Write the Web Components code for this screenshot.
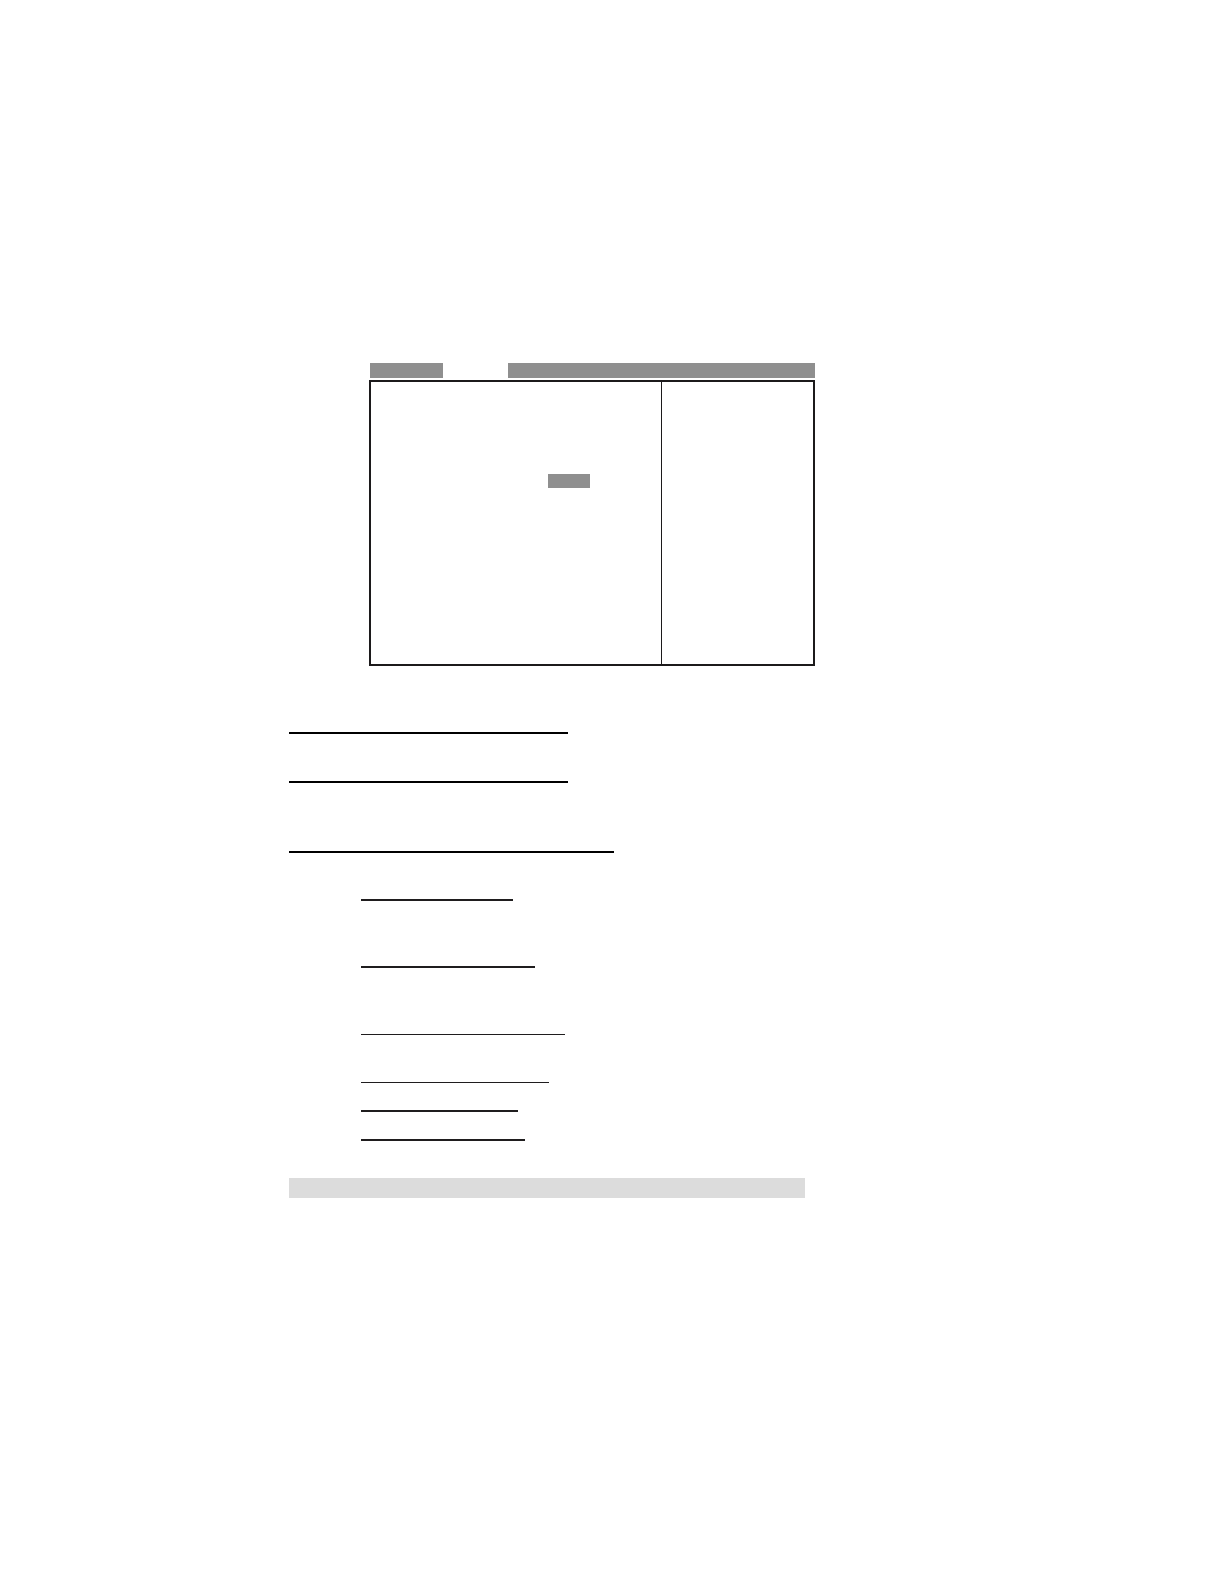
<!DOCTYPE html>
<html lang="en">
<head>
<meta charset="utf-8">
<meta name="viewport" content="width=device-width, initial-scale=1">
<title>Setup page</title>
<style>
body {
    margin: 0;
    background: #fff;
    font-family: "Liberation Sans", Arial, sans-serif;
}
</style>
</head>
<body>
<manual-page>
    <setup-screen slot="figure"></setup-screen>
    <heading-rule length="279" space="66"></heading-rule>
    <heading-rule length="279" space="47"></heading-rule>
    <heading-rule length="325" space="68"></heading-rule>
    <heading-rule sub length="152" space="46"></heading-rule>
    <heading-rule sub length="174" space="65"></heading-rule>
    <heading-rule sub thin length="204" space="66"></heading-rule>
    <heading-rule sub thin length="188" space="47"></heading-rule>
    <heading-rule sub length="157" space="27"></heading-rule>
    <heading-rule sub length="164" space="27"></heading-rule>
    <note-band slot="note"></note-band>
</manual-page>

<script>
class ManualPage extends HTMLElement {
    constructor() {
        super();
        this.attachShadow({ mode: "open" }).innerHTML = `
        <style>
        :host {
            display: block;
            box-sizing: border-box;
            max-width: 815px;
            padding: 363px 0 386px 289px;
        }
        main {
            display: flex;
            flex-direction: column;
        }
        ::slotted(setup-screen) {
            margin-left: 80px;
        }
        ::slotted(note-band) {
            margin: 37px 10px 0 0;
        }
        </style>
        <main>
            <slot name="figure"></slot>
            <slot></slot>
            <slot name="note"></slot>
        </main>`;
    }
}

class SetupScreen extends HTMLElement {
    constructor() {
        super();
        this.attachShadow({ mode: "open" }).innerHTML = `
        <style>
        * {
            box-sizing: border-box;
        }
        :host {
            display: flex;
            flex-direction: column;
            gap: 2px;
        }
        .menu {
            display: flex;
            gap: 65px;
            height: 15px;
            padding-left: 1px;
        }
        .menu span {
            flex: 1;
            background: #8f8f8f;
        }
        .menu span:first-child {
            flex: 0 0 73px;
        }
        .frame {
            display: flex;
            min-height: 286px;
            border: 2px solid #1c1a1b;
        }
        .items {
            flex: 1;
            padding: 92px 0 0 177px;
        }
        .value {
            width: 42px;
            height: 14px;
            background: #8f8f8f;
        }
        .help {
            flex: 0 0 152px;
            border-left: 1px solid #1c1a1b;
        }
        </style>
        <div class="menu"><span></span><span></span></div>
        <div class="frame">
            <div class="items"><div class="value"></div></div>
            <div class="help"></div>
        </div>`;
    }
}

class HeadingRule extends HTMLElement {
    constructor() {
        super();
        this.attachShadow({ mode: "open" });
    }

    connectedCallback() {
        this.render();
    }

    render() {
        this.shadowRoot.innerHTML = `
        <style>
        :host {
            display: block;
            margin-top: ${this.getAttribute("space")}px;
        }
        :host([sub]) {
            margin-left: 72px;
        }
        hr {
            max-width: ${this.getAttribute("length")}px;
            margin: 0;
            border: 0;
            border-top: 2px solid #000;
        }
        :host([sub]) hr {
            border-color: #1f1d1e;
        }
        :host([thin]) hr {
            border-width: 1px;
        }
        </style>
        <hr>`;
    }
}

class NoteBand extends HTMLElement {
    constructor() {
        super();
        this.attachShadow({ mode: "open" }).innerHTML = `
        <style>
        :host {
            display: block;
            min-height: 20px;
            background: #dcdcdc;
        }
        </style>
        <slot></slot>`;
    }
}

customElements.define("manual-page", ManualPage);
customElements.define("setup-screen", SetupScreen);
customElements.define("heading-rule", HeadingRule);
customElements.define("note-band", NoteBand);
</script>
</body>
</html>
